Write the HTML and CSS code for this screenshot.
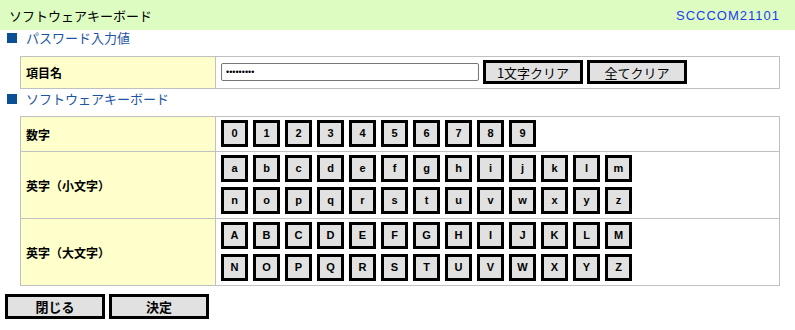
FILE: index.html
```html
<!DOCTYPE html>
<html lang="ja">
<head>
<meta charset="utf-8">
<title>ソフトウェアキーボード</title>
<link rel="stylesheet" href="styles.css">
</head>
<body>
<div class="titlebar">
  <span class="title">ソフトウェアキーボード</span>
  <span class="screen-id">SCCCOM21101</span>
</div>
<div class="section-head"><span class="sq"></span><span>パスワード入力値</span></div>
<table class="grid pw">
  <tr>
    <th class="label">項目名</th>
    <td class="value">
      <div class="pw-row">
        <input class="pw-input" type="password" value="123456789">
        <button class="btn">1文字クリア</button>
        <button class="btn">全てクリア</button>
      </div>
    </td>
  </tr>
</table>
<div class="section-head second"><span class="sq"></span><span>ソフトウェアキーボード</span></div>
<table class="grid kb">
  <tr>
    <th class="label">数字</th>
    <td class="keys">
      <div class="keyrow"><button class="key">0</button><button class="key">1</button><button class="key">2</button><button class="key">3</button><button class="key">4</button><button class="key">5</button><button class="key">6</button><button class="key">7</button><button class="key">8</button><button class="key">9</button></div>
    </td>
  </tr>
  <tr>
    <th class="label">英字（小文字）</th>
    <td class="keys">
      <div class="keyrow"><button class="key">a</button><button class="key">b</button><button class="key">c</button><button class="key">d</button><button class="key">e</button><button class="key">f</button><button class="key">g</button><button class="key">h</button><button class="key">i</button><button class="key">j</button><button class="key">k</button><button class="key">l</button><button class="key">m</button></div>
      <div class="keyrow"><button class="key">n</button><button class="key">o</button><button class="key">p</button><button class="key">q</button><button class="key">r</button><button class="key">s</button><button class="key">t</button><button class="key">u</button><button class="key">v</button><button class="key">w</button><button class="key">x</button><button class="key">y</button><button class="key">z</button></div>
    </td>
  </tr>
  <tr>
    <th class="label">英字（大文字）</th>
    <td class="keys">
      <div class="keyrow"><button class="key">A</button><button class="key">B</button><button class="key">C</button><button class="key">D</button><button class="key">E</button><button class="key">F</button><button class="key">G</button><button class="key">H</button><button class="key">I</button><button class="key">J</button><button class="key">K</button><button class="key">L</button><button class="key">M</button></div>
      <div class="keyrow"><button class="key">N</button><button class="key">O</button><button class="key">P</button><button class="key">Q</button><button class="key">R</button><button class="key">S</button><button class="key">T</button><button class="key">U</button><button class="key">V</button><button class="key">W</button><button class="key">X</button><button class="key">Y</button><button class="key">Z</button></div>
    </td>
  </tr>
</table>
<div class="footer">
  <button class="btn bold">閉じる</button>
  <button class="btn bold">決定</button>
</div>
</body>
</html>
```
FILE: styles.css
```css
html, body {
  margin: 0;
  padding: 0;
  background: #ffffff;
}
body {
  font-family: "Noto Sans CJK JP", "Liberation Sans", sans-serif;
  font-size: 12px;
  color: #000;
  width: 795px;
}
.titlebar {
  height: 30px;
  background: #ddfcc2;
  display: flex;
  align-items: center;
  justify-content: space-between;
  padding: 0 15px 0 9px;
}
.title {
  font-size: 13px;
}
.screen-id {
  font-family: "Liberation Sans", sans-serif;
  font-size: 13px;
  color: #1d3cf0;
  letter-spacing: 1px;
}
.section-head {
  height: 16px;
  line-height: 16px;
  display: flex;
  align-items: center;
  gap: 9px;
  padding-left: 7px;
  color: #1b55a3;
  font-size: 13px;
}
.section-head.second {
  margin-top: 2px;
}
.sq {
  width: 10px;
  height: 10px;
  background: #0b4f95;
  display: inline-block;
}
.grid {
  border-collapse: collapse;
  margin-left: 20px;
  width: 760px;
}
.grid.pw {
  margin-top: 10px;
}
.grid.kb {
  margin-top: 9px;
}
.grid th, .grid td {
  border: 1px solid #c0c0c0;
}
.label {
  width: 189px;
  background: #ffffcc;
  text-align: left;
  font-weight: bold;
  font-size: 12px;
  padding: 0 0 0 5px;
  vertical-align: middle;
}
.value {
  padding: 3px 4px 4px 5px;
}
.pw-row {
  display: flex;
  align-items: center;
  gap: 4px;
}
.pw-input {
  box-sizing: border-box;
  width: 258px;
  height: 18px;
  margin: 0;
  border: 1px solid #767676;
  border-radius: 2px;
  padding: 0 4px;
  font-size: 9px;
  font-family: "Liberation Sans", sans-serif;
}
.btn {
  box-sizing: border-box;
  width: 100px;
  height: 24px;
  margin: 0;
  padding: 0;
  border: 3px solid #000;
  background: #e1e1e1;
  font-family: "Noto Sans CJK JP", "Liberation Sans", sans-serif;
  font-size: 13px;
  color: #000;
  line-height: 1;
}
.btn.bold {
  height: 25px;
  font-weight: bold;
  font-size: 13px;
}
.keys {
  padding: 3px 4px 4px 5px;
}
.keyrow {
  display: flex;
  gap: 5px;
}
.keyrow + .keyrow {
  margin-top: 5px;
}
.key {
  box-sizing: border-box;
  width: 27px;
  height: 27px;
  margin: 0;
  padding: 0;
  border: 3px solid #000;
  background: #e1e1e1;
  font-family: "Liberation Sans", sans-serif;
  font-weight: bold;
  font-size: 11px;
  color: #000;
  line-height: 1;
}
.footer {
  margin-top: 8px;
  padding-left: 5px;
  display: flex;
  gap: 4px;
}
```
